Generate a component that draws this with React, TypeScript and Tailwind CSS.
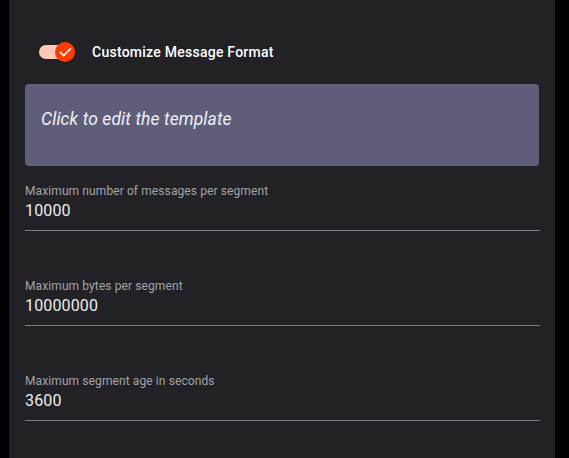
import { Check } from "lucide-react";

const fields = [
  { label: "Maximum number of messages per segment", value: "10000" },
  { label: "Maximum bytes per segment", value: "10000000" },
  { label: "Maximum segment age in seconds", value: "3600" },
];

const Toggle = () => (
  <div className="pl-[14px]">
    <div className="relative w-[34px] h-[14px] rounded-full bg-[#ffc8b4]">
      <div className="absolute left-[16px] top-[-3px] w-5 h-5 rounded-full bg-[#ff3d00] flex items-center justify-center shadow">
        <Check className="w-[15px] h-[15px] text-white" strokeWidth={2.6} />
      </div>
    </div>
  </div>
);

export default function App() {
  return (
    <div className="h-[458px] w-[569px] bg-black flex font-['Roboto',sans-serif] overflow-hidden">
      <div className="ml-[9px] w-[546px] h-full bg-[#212126] px-4 flex flex-col">
        {/* Switch row */}
        <div className="mt-[42px] h-5 flex items-center">
          <Toggle />
          <span className="ml-[19px] text-[14px] leading-5 font-medium tracking-[0.25px] text-white">
            Customize Message Format
          </span>
        </div>

        {/* Template box */}
        <div className="mt-[22px] h-[82px] rounded-[4px] bg-[#5e5e7a] px-4 pt-[23px]">
          <span className="text-[17.5px] leading-6 italic tracking-[0.1px] text-[#f0f0f4]">
            Click to edit the template
          </span>
        </div>

        {/* Fields */}
        <div className="mt-[17px] flex flex-col gap-[47px]">
          {fields.map((f) => (
            <div key={f.label} className="h-[48px] border-b border-[#7e7e84] mr-[-1px]">
              <div className="text-[12px] leading-4 tracking-[0.1px] text-[#a4a4aa]">{f.label}</div>
              <div className="pt-[2px] text-[16px] leading-5 tracking-[0.15px] text-[#ececee]">{f.value}</div>
            </div>
          ))}
        </div>
      </div>
    </div>
  );
}
